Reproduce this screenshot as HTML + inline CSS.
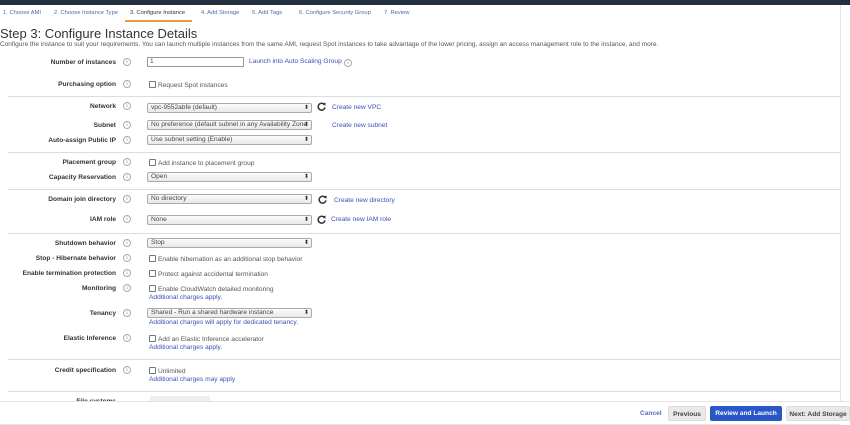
<!DOCTYPE html>
<html><head><meta charset="utf-8"><style>
*{margin:0;padding:0;box-sizing:border-box}
body{width:850px;height:425px;overflow:hidden;background:#fff;font-family:"Liberation Sans",sans-serif;color:#444;position:relative}
.a{position:absolute;white-space:nowrap}
.top{left:0;top:0;width:850px;height:5px;background:#232f3e}
.tab{top:10px;font-size:5.8px;color:#4a6aaa}
.lab{right:734px;font-size:6.6px;font-weight:bold;color:#333;text-align:right;padding-top:1px}
.inf{left:123px;width:8px;height:8px;border:1px solid #aaa;border-radius:50%;font-size:5.5px;color:#888;text-align:center;line-height:6px;font-family:"Liberation Serif",serif}
.sel{left:147px;width:165px;height:10px;border:1px solid #aaa;border-radius:2px;background:linear-gradient(#fbfbfb,#e8e8e8);font-size:6.6px;color:#444;padding-left:3px;line-height:8px;overflow:hidden}
.sel:after{content:"⬍";position:absolute;right:2px;top:0;font-size:6px;color:#333}
.cb{font-size:6.6px;color:#555;left:149px;padding-top:1px}
.cb:before{content:"";display:inline-block;width:5px;height:5px;border:1px solid #777;border-radius:1px;margin-right:2px;vertical-align:-1px}
.lk{font-size:6.6px;color:#3b4fb5}
.sep{left:8px;width:832px;height:1px;background:#ddd}
.ref{width:9px;height:9px}
.btn{top:406px;height:15px;font-size:6.6px;font-weight:bold;line-height:15px;text-align:center;border-radius:2px}
</style></head><body>
<div class="a top"></div>
<div class="a tab" style="left:3px">1. Choose AMI</div>
<div class="a tab" style="left:54px">2. Choose Instance Type</div>
<div class="a tab" style="left:130px;color:#333">3. Configure Instance</div>
<div class="a" style="left:125px;top:20px;width:67px;height:2px;background:#ec9b3a"></div>
<div class="a tab" style="left:201px">4. Add Storage</div>
<div class="a tab" style="left:252px">5. Add Tags</div>
<div class="a tab" style="left:299px">6. Configure Security Group</div>
<div class="a tab" style="left:384px">7. Review</div>
<div class="a" style="left:0;top:26px;font-size:13px;color:#333">Step 3: Configure Instance Details</div>
<div class="a" style="left:0;top:41px;font-size:6.5px;color:#555">Configure the instance to suit your requirements. You can launch multiple instances from the same AMI, request Spot instances to take advantage of the lower pricing, assign an access management role to the instance, and more.</div>
<div class="a" style="left:840px;top:5px;width:1px;height:396px;background:#e4e4e4"></div>

<div class="a lab" style="top:58px">Number of instances</div><div class="a inf" style="top:58px">i</div>
<div class="a" style="left:147px;top:57px;width:97px;height:10px;border:1px solid #999;font-size:6.6px;padding-left:2px;line-height:8px">1</div>
<div class="a lk" style="left:249px;top:58px">Launch into Auto Scaling Group</div><div class="a inf" style="left:344px;top:59px">i</div>
<div class="a lab" style="top:80px">Purchasing option</div><div class="a inf" style="top:80px">i</div>
<div class="a cb" style="top:80px">Request Spot instances</div>
<div class="a sep" style="top:96px"></div>

<svg width="0" height="0" style="position:absolute"><defs><symbol id="r" viewBox="0 0 10 10"><path d="M8.3 3.2A3.8 3.8 0 1 0 8.8 6" fill="none" stroke="#333" stroke-width="1.7"/><path d="M6.2 1.2L9.6 0.8 9.2 4.4z" fill="#333"/></symbol></defs></svg>

<div class="a lab" style="top:102px">Network</div><div class="a inf" style="top:102px">i</div>
<div class="a sel" style="top:103px">vpc-9552abfe (default)</div><svg class="a ref" style="left:317px;top:102px"><use href="#r"/></svg>
<div class="a lk" style="left:332px;top:104px">Create new VPC</div>
<div class="a lab" style="top:121px">Subnet</div><div class="a inf" style="top:121px">i</div>
<div class="a sel" style="top:120px">No preference (default subnet in any Availability Zone</div>
<div class="a lk" style="left:332px;top:122px">Create new subnet</div>
<div class="a lab" style="top:136px">Auto-assign Public IP</div><div class="a inf" style="top:136px">i</div>
<div class="a sel" style="top:135px">Use subnet setting (Enable)</div>
<div class="a sep" style="top:152px"></div>

<div class="a lab" style="top:158px">Placement group</div><div class="a inf" style="top:158px">i</div>
<div class="a cb" style="top:158px">Add instance to placement group</div>
<div class="a lab" style="top:173px">Capacity Reservation</div><div class="a inf" style="top:173px">i</div>
<div class="a sel" style="top:172px">Open</div>
<div class="a sep" style="top:189px"></div>

<div class="a lab" style="top:195px">Domain join directory</div><div class="a inf" style="top:195px">i</div>
<div class="a sel" style="top:194px">No directory</div><svg class="a ref" style="left:318px;top:195px"><use href="#r"/></svg>
<div class="a lk" style="left:334px;top:197px">Create new directory</div>
<div class="a lab" style="top:215px">IAM role</div><div class="a inf" style="top:215px">i</div>
<div class="a sel" style="top:215px">None</div><svg class="a ref" style="left:317px;top:215px"><use href="#r"/></svg>
<div class="a lk" style="left:331px;top:216px">Create new IAM role</div>
<div class="a sep" style="top:233px"></div>

<div class="a lab" style="top:239px">Shutdown behavior</div><div class="a inf" style="top:239px">i</div>
<div class="a sel" style="top:238px">Stop</div>
<div class="a lab" style="top:254px">Stop - Hibernate behavior</div><div class="a inf" style="top:254px">i</div>
<div class="a cb" style="top:254px">Enable hibernation as an additional stop behavior</div>
<div class="a lab" style="top:269px">Enable termination protection</div><div class="a inf" style="top:269px">i</div>
<div class="a cb" style="top:269px">Protect against accidental termination</div>
<div class="a lab" style="top:284px">Monitoring</div><div class="a inf" style="top:284px">i</div>
<div class="a cb" style="top:284px">Enable CloudWatch detailed monitoring</div>
<div class="a lk" style="left:149px;top:294px">Additional charges apply.</div>
<div class="a lab" style="top:309px">Tenancy</div><div class="a inf" style="top:309px">i</div>
<div class="a sel" style="top:308px">Shared - Run a shared hardware instance</div>
<div class="a lk" style="left:149px;top:319px">Additional charges will apply for dedicated tenancy.</div>
<div class="a lab" style="top:334px">Elastic Inference</div><div class="a inf" style="top:334px">i</div>
<div class="a cb" style="top:334px">Add an Elastic Inference accelerator</div>
<div class="a lk" style="left:149px;top:344px">Additional charges apply.</div>
<div class="a sep" style="top:359px"></div>
<div class="a lab" style="top:366px">Credit specification</div><div class="a inf" style="top:366px">i</div>
<div class="a cb" style="top:366px">Unlimited</div>
<div class="a lk" style="left:149px;top:376px">Additional charges may apply</div>
<div class="a sep" style="top:391px"></div>
<div class="a lab" style="top:397px">File systems</div>
<div class="a" style="left:150px;top:396px;width:60px;height:6px;background:#eee"></div>

<div class="a" style="left:0;top:401px;width:850px;height:24px;background:#fff;border-top:1px solid #e4e4e4"></div>
<div class="a" style="left:0;top:424px;width:840px;height:1px;background:#e4e4e4"></div>
<div class="a lk" style="left:640px;top:410px;font-weight:bold;color:#5570c0">Cancel</div>
<div class="a btn" style="left:668px;width:38px;background:#e9e9e9;color:#444;border:1px solid #ddd">Previous</div>
<div class="a btn" style="left:710px;width:72px;background:#2a57c8;color:#fff">Review and Launch</div>
<div class="a btn" style="left:786px;width:64px;background:#e9e9e9;color:#444;border:1px solid #ddd">Next: Add Storage</div>
</body></html>
